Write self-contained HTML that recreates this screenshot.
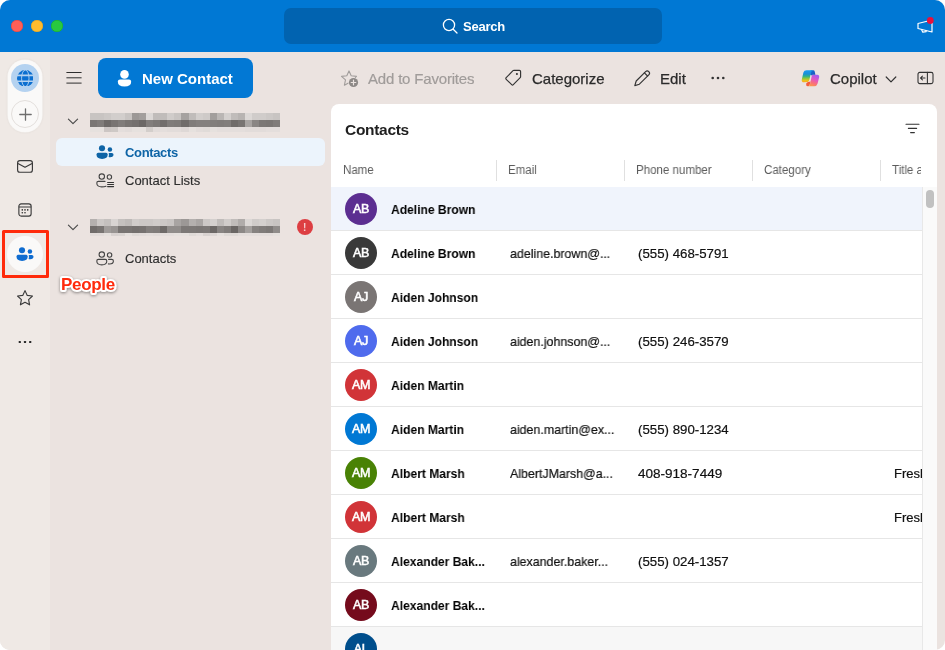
<!DOCTYPE html>
<html lang="en">
<head>
<meta charset="utf-8">
<title>Contacts</title>
<style>
*{box-sizing:border-box;margin:0;padding:0}
html,body{width:945px;height:650px;background:#fff;overflow:hidden}
body{font-family:"Liberation Sans",sans-serif;color:#242424;-webkit-font-smoothing:antialiased}
#win{position:absolute;left:0;top:0;width:945px;height:650px;border-radius:10px;overflow:hidden;background:#ebe3e0}
.abs{position:absolute}
.t{position:absolute;white-space:nowrap;line-height:1;will-change:transform}
/* top bar */
#top{position:absolute;left:0;top:0;width:945px;height:52px;background:#0078d4}
.tl{position:absolute;top:20px;width:12px;height:12px;border-radius:50%}
#search{position:absolute;left:284px;top:8px;width:378px;height:35.5px;border-radius:7px;background:#0163b0}
/* rail */
#rail{position:absolute;left:0;top:52px;width:50px;height:598px;background:#efe9e5}
#pill{position:absolute;left:8px;top:8px;width:34px;height:72px;border-radius:17px;background:#faf9f8;box-shadow:0 0 0 .6px #f7f5f3,0 0 3px rgba(0,0,0,.10)}
/* folder pane */
#newc{position:absolute;left:98px;top:58px;width:155px;height:40px;border-radius:8px;background:#0278d4}
.sel{position:absolute;left:56px;top:138px;width:269px;height:28px;border-radius:6px;background:#ecf4fc}
.blur{position:absolute;left:90px;width:191px;height:16px;filter:blur(.6px)}
/* toolbar */
/* panel */
#panel{position:absolute;left:331px;top:104px;width:605.5px;height:546px;background:#fff;border-radius:8px 8px 0 0;overflow:hidden}
.hd{will-change:transform;position:absolute;top:60px;transform-origin:0 50%;transform:scaleX(.96);font-size:12px;color:#5c5c5c;line-height:12px;white-space:nowrap}
.sep{position:absolute;top:56px;width:1px;height:21px;background:#e0e0e0}
.row{position:absolute;left:0;width:591px;height:44px;border-bottom:1px solid #e6e6e6}
.av{will-change:transform;position:absolute;left:14px;top:6px;width:32px;height:32px;border-radius:50%;color:#fff;font-size:12.5px;line-height:32px;text-align:center;font-weight:400;letter-spacing:-.3px;-webkit-text-stroke:.55px #fff}
.nm{will-change:transform;position:absolute;left:60px;top:16px;transform-origin:0 50%;transform:scaleX(.928);font-size:13px;line-height:14px;font-weight:700;color:#000;white-space:nowrap}
.em{will-change:transform;position:absolute;left:179px;top:16px;transform-origin:0 50%;transform:scaleX(.955);font-size:13px;line-height:14px;color:#111;-webkit-text-stroke:.2px #111;white-space:nowrap}
.ph{will-change:transform;position:absolute;left:307px;top:16px;transform-origin:0 50%;transform:scaleX(1.02);font-size:13px;line-height:14px;color:#111;-webkit-text-stroke:.2px #111;white-space:nowrap}
.ti{position:absolute;left:563px;top:16px;will-change:transform;font-size:13px;line-height:14px;color:#111;-webkit-text-stroke:.2px #111;white-space:nowrap;width:28px;overflow:hidden}
</style>
</head>
<body>
<div id="win">

<!-- TOP BAR -->
<div id="top">
  <div class="tl" style="left:11px;background:#ff5f57;box-shadow:inset 0 0 0 .5px #e0443e"></div>
  <div class="tl" style="left:31px;background:#febc2e;box-shadow:inset 0 0 0 .5px #dea123"></div>
  <div class="tl" style="left:51px;background:#28c840;box-shadow:inset 0 0 0 .5px #1aab29"></div>
  <div id="search">
    <svg class="abs" style="left:157px;top:8.6px" width="18" height="18" viewBox="0 0 18 18" fill="none" stroke="#fff" stroke-width="1.3" stroke-linecap="round"><circle cx="8" cy="8" r="5.6"/><path d="M12.2 12.2 L16 16"/></svg>
    <div class="t" style="left:178.5px;top:11.6px;font-size:13px;font-weight:700;color:#fff;letter-spacing:-.25px">Search</div>
  </div>
  <svg class="abs" style="left:915px;top:16px" width="22" height="20" viewBox="0 0 22 20" fill="none" stroke="#fff" stroke-width="1.2" stroke-linejoin="round"><path d="M3 7.5 L17 4 L17 16 L3 12.5 Z"/><path d="M6.5 13.4 L7.8 16.2 L11.2 15.6 L10.8 14.4"/><circle cx="15.3" cy="4.5" r="3.4" fill="#e8113c" stroke="none"/></svg>
</div>

<!-- LEFT RAIL -->
<div id="rail">
  <div id="pill">
    <div class="abs" style="left:3px;top:4px;width:28px;height:28px;border-radius:50%;background:#b4d2f0"></div>
    <svg class="abs" style="left:8.7px;top:9.7px" width="16.6" height="16.6" viewBox="0 0 16 16"><circle cx="8" cy="8" r="8" fill="#0b6fd0"/><g stroke="#b4d2f0" fill="none"><ellipse cx="8" cy="8" rx="3.6" ry="8" stroke-width=".9"/><path d="M0 5.2H16M0 10.8H16" stroke-width="1.5"/></g></svg>
    <div class="abs" style="left:3px;top:40px;width:28px;height:28px;border-radius:50%;border:1px solid #e3dfdc;background:#faf9f8"></div>
    <svg class="abs" style="left:10.5px;top:47.5px" width="13" height="13" viewBox="0 0 13 13" stroke="#6e6e6e" stroke-width="1.3" stroke-linecap="round"><path d="M6.5 .8V12.2M.8 6.5H12.2"/></svg>
  </div>
  <!-- mail -->
  <svg class="abs" style="left:16px;top:107px" width="18" height="15" viewBox="0 0 18 15" fill="none" stroke="#3a3a3a" stroke-width="1.15" stroke-linejoin="round"><rect x="1.6" y="1.6" width="14.8" height="11.6" rx="2.3"/><path d="M1.9 4.4 L9 8.3 L16.1 4.4"/></svg>
  <!-- calendar -->
  <svg class="abs" style="left:18px;top:151px" width="14" height="14" viewBox="0 0 16 16" fill="none" stroke="#3a3a3a" stroke-width="1.3"><rect x="1" y="1" width="14" height="14" rx="2.6"/><path d="M1 4.6H15"/><g fill="#333" stroke="none"><circle cx="4.9" cy="7.9" r=".95"/><circle cx="8" cy="7.9" r=".95"/><circle cx="11.1" cy="7.9" r=".95"/><circle cx="4.9" cy="11.1" r=".95"/><circle cx="8" cy="11.1" r=".95"/></g></svg>
  <!-- people selected -->
  <div class="abs" style="left:7px;top:184px;width:36px;height:36px;border-radius:50%;background:#faf9f8"></div>
  <svg class="abs" style="left:16px;top:195px" width="18" height="14" viewBox="0 0 18 14" fill="#0f6cd0"><circle cx="6" cy="3.3" r="3.05"/><path d="M0.5 9.6 Q0.5 7.8 2.2 7.8 H10 Q11.7 7.8 11.7 9.6 Q11.7 13.9 6.1 13.9 Q0.5 13.9 0.5 9.6Z"/><circle cx="13.9" cy="4.4" r="2.25"/><path d="M12.7 8.1 H15.8 Q17.5 8.1 17.5 9.6 Q17.5 12.3 14.2 12.3 Q13.2 12.3 12.6 12.1 Q13 10.8 12.9 9.4 Q12.9 8.7 12.7 8.1Z"/></svg>
  <div class="abs" style="left:2px;top:178px;width:47px;height:48px;border:3px solid #ff2a0a;border-radius:1.5px"></div>
  <!-- star -->
  <svg class="abs" style="left:16px;top:237px" width="18" height="18" viewBox="0 0 20 20" fill="none" stroke="#3a3a3a" stroke-width="1.25" stroke-linejoin="round"><path d="M10 1.8 L12.5 7.1 L18.3 7.8 L14 11.8 L15.1 17.6 L10 14.7 L4.9 17.6 L6 11.8 L1.7 7.8 L7.5 7.1 Z"/></svg>
  <!-- dots -->
  <svg class="abs" style="left:17px;top:288px" width="16" height="4" viewBox="0 0 16 4" fill="#2a2a2a"><rect x="1.7" y=".9" width="2.2" height="2.2" rx=".5"/><rect x="6.9" y=".9" width="2.2" height="2.2" rx=".5"/><rect x="12.1" y=".9" width="2.2" height="2.2" rx=".5"/></svg>
</div>

<!-- FOLDER PANE -->
<svg class="abs" style="left:66px;top:71px" width="16" height="14" viewBox="0 0 16 14" stroke="#2e2e2e" stroke-width="1" stroke-linecap="round"><path d="M.8 1.5H15.2M.8 6.8H15.2M.8 12.1H15.2"/></svg>
<div id="newc">
  <svg class="abs" style="left:18.6px;top:11.8px" width="15" height="17" viewBox="0 0 15 17" fill="#fff"><circle cx="7.5" cy="4.4" r="4.3"/><path d="M0.8 11.8 Q0.8 9.6 3 9.6 H12 Q14.2 9.6 14.2 11.8 Q14.2 16.6 7.5 16.6 Q0.8 16.6 0.8 11.8Z"/></svg>
  <div class="t" style="left:44px;top:13px;font-size:15px;font-weight:700;color:#fff">New Contact</div>
</div>

<svg class="abs" style="left:67px;top:118px" width="12" height="7" viewBox="0 0 12 7" fill="none" stroke="#4a4a4a" stroke-width="1.15" stroke-linecap="round" stroke-linejoin="round"><path d="M1.4 1.1 L6 5.7 L10.6 1.1"/></svg>
<svg class="abs" style="left:90.3px;top:113px" preserveAspectRatio="none" width="190" height="19" viewBox="0 0 191 19" shape-rendering="crispEdges"><rect x="0.00" y="0" width="7.37" height="7" fill="#c8c4c2"/><rect x="7.07" y="0" width="7.37" height="7" fill="#c8c4c2"/><rect x="14.15" y="0" width="7.37" height="7" fill="#ccc8c6"/><rect x="21.22" y="0" width="7.37" height="7" fill="#d2cecc"/><rect x="28.30" y="0" width="7.37" height="7" fill="#d2cecc"/><rect x="35.37" y="0" width="7.37" height="7" fill="#c8c4c2"/><rect x="42.44" y="0" width="7.37" height="7" fill="#9c9896"/><rect x="49.52" y="0" width="7.37" height="7" fill="#a29e9c"/><rect x="56.59" y="0" width="7.37" height="7" fill="#dcd8d6"/><rect x="63.67" y="0" width="7.37" height="7" fill="#c0bcba"/><rect x="70.74" y="0" width="7.37" height="7" fill="#c0bcba"/><rect x="77.81" y="0" width="7.37" height="7" fill="#d0ccca"/><rect x="84.89" y="0" width="7.37" height="7" fill="#c8c4c2"/><rect x="91.96" y="0" width="7.37" height="7" fill="#a6a2a0"/><rect x="99.04" y="0" width="7.37" height="7" fill="#c0bcba"/><rect x="106.11" y="0" width="7.37" height="7" fill="#d2cecc"/><rect x="113.19" y="0" width="7.37" height="7" fill="#cecac8"/><rect x="120.26" y="0" width="7.37" height="7" fill="#a29e9c"/><rect x="127.33" y="0" width="7.37" height="7" fill="#bab6b4"/><rect x="134.41" y="0" width="7.37" height="7" fill="#d4d0ce"/><rect x="141.48" y="0" width="7.37" height="7" fill="#c0bcba"/><rect x="148.56" y="0" width="7.37" height="7" fill="#b8b4b2"/><rect x="155.63" y="0" width="7.37" height="7" fill="#dcd8d6"/><rect x="162.70" y="0" width="7.37" height="7" fill="#d0ccca"/><rect x="169.78" y="0" width="7.37" height="7" fill="#d0ccca"/><rect x="176.85" y="0" width="7.37" height="7" fill="#ccc8c6"/><rect x="183.93" y="0" width="7.37" height="7" fill="#c8c4c2"/><rect x="0.00" y="7" width="7.37" height="7" fill="#7a7674"/><rect x="7.07" y="7" width="7.37" height="7" fill="#807c7a"/><rect x="14.15" y="7" width="7.37" height="7" fill="#6e6a68"/><rect x="21.22" y="7" width="7.37" height="7" fill="#787472"/><rect x="28.30" y="7" width="7.37" height="7" fill="#807c7a"/><rect x="35.37" y="7" width="7.37" height="7" fill="#787472"/><rect x="42.44" y="7" width="7.37" height="7" fill="#74706e"/><rect x="49.52" y="7" width="7.37" height="7" fill="#6c6866"/><rect x="56.59" y="7" width="7.37" height="7" fill="#827e7c"/><rect x="63.67" y="7" width="7.37" height="7" fill="#7c7876"/><rect x="70.74" y="7" width="7.37" height="7" fill="#726e6c"/><rect x="77.81" y="7" width="7.37" height="7" fill="#807c7a"/><rect x="84.89" y="7" width="7.37" height="7" fill="#7e7a78"/><rect x="91.96" y="7" width="7.37" height="7" fill="#706c6a"/><rect x="99.04" y="7" width="7.37" height="7" fill="#807c7a"/><rect x="106.11" y="7" width="7.37" height="7" fill="#84807e"/><rect x="113.19" y="7" width="7.37" height="7" fill="#84807e"/><rect x="120.26" y="7" width="7.37" height="7" fill="#827e7c"/><rect x="127.33" y="7" width="7.37" height="7" fill="#807c7a"/><rect x="134.41" y="7" width="7.37" height="7" fill="#827e7c"/><rect x="141.48" y="7" width="7.37" height="7" fill="#706c6a"/><rect x="148.56" y="7" width="7.37" height="7" fill="#787472"/><rect x="155.63" y="7" width="7.37" height="7" fill="#a8a4a2"/><rect x="162.70" y="7" width="7.37" height="7" fill="#8a8684"/><rect x="169.78" y="7" width="7.37" height="7" fill="#7c7876"/><rect x="176.85" y="7" width="7.37" height="7" fill="#7a7674"/><rect x="183.93" y="7" width="7.37" height="7" fill="#807c7a"/><rect x="0.00" y="14" width="7.37" height="5" fill="#e6e1de"/><rect x="7.07" y="14" width="7.37" height="5" fill="#e6e1de"/><rect x="14.15" y="14" width="7.37" height="5" fill="#ccc6c4"/><rect x="21.22" y="14" width="7.37" height="5" fill="#cec9c6"/><rect x="28.30" y="14" width="7.37" height="5" fill="#e4dedc"/><rect x="35.37" y="14" width="7.37" height="5" fill="#e2dcda"/><rect x="42.44" y="14" width="7.37" height="5" fill="#e6e1de"/><rect x="49.52" y="14" width="7.37" height="5" fill="#e6e1de"/><rect x="56.59" y="14" width="7.37" height="5" fill="#d3cecb"/><rect x="63.67" y="14" width="7.37" height="5" fill="#e2dcda"/><rect x="70.74" y="14" width="7.37" height="5" fill="#e4dedc"/><rect x="77.81" y="14" width="7.37" height="5" fill="#e2dcda"/><rect x="84.89" y="14" width="7.37" height="5" fill="#e2dcda"/><rect x="91.96" y="14" width="7.37" height="5" fill="#ded8d6"/><rect x="99.04" y="14" width="7.37" height="5" fill="#e6e1de"/><rect x="106.11" y="14" width="7.37" height="5" fill="#e2dcda"/><rect x="113.19" y="14" width="7.37" height="5" fill="#e0dbd8"/><rect x="120.26" y="14" width="7.37" height="5" fill="#e6e1de"/><rect x="127.33" y="14" width="7.37" height="5" fill="#e4dedc"/><rect x="134.41" y="14" width="7.37" height="5" fill="#e4dedc"/><rect x="141.48" y="14" width="7.37" height="5" fill="#e4dedc"/><rect x="148.56" y="14" width="7.37" height="5" fill="#e4dedc"/><rect x="155.63" y="14" width="7.37" height="5" fill="#e2dcda"/><rect x="162.70" y="14" width="7.37" height="5" fill="#e2dcda"/><rect x="169.78" y="14" width="7.37" height="5" fill="#e2dcda"/><rect x="176.85" y="14" width="7.37" height="5" fill="#e4dedc"/><rect x="183.93" y="14" width="7.37" height="5" fill="#e4dedc"/></svg>

<div class="sel"></div>
<svg class="abs" style="left:96px;top:145px" width="18" height="14" viewBox="0 0 18 14" fill="#0e64a6"><circle cx="6" cy="3.3" r="3.05"/><path d="M0.5 9.6 Q0.5 7.8 2.2 7.8 H10 Q11.7 7.8 11.7 9.6 Q11.7 13.9 6.1 13.9 Q0.5 13.9 0.5 9.6Z"/><circle cx="13.9" cy="4.4" r="2.25"/><path d="M12.7 8.1 H15.8 Q17.5 8.1 17.5 9.6 Q17.5 12.3 14.2 12.3 Q13.2 12.3 12.6 12.1 Q13 10.8 12.9 9.4 Q12.9 8.7 12.7 8.1Z"/></svg>
<div class="t" style="left:125px;top:146px;font-size:13px;font-weight:700;color:#0e64a6;letter-spacing:-.35px">Contacts</div>

<svg class="abs" style="left:96px;top:173px" width="19" height="15" viewBox="0 0 19 15" fill="none" stroke="#444" stroke-width="1.1" stroke-linecap="round"><circle cx="5.8" cy="3.6" r="2.7"/><circle cx="13.4" cy="4" r="2.2"/><path d="M10 13.2 Q8.4 13.9 5.8 13.9 Q0.8 13.9 0.8 10 Q0.8 8.4 2.4 8.4 H9"/><path d="M11.6 9.4H17.6M11.6 11.5H17.6M11.6 13.6H17.6" stroke-width="1.05" stroke="#333"/></svg>
<div class="t" style="left:125px;top:174px;font-size:13px;color:#2e2e2e;-webkit-text-stroke:.15px #2e2e2e">Contact Lists</div>

<svg class="abs" style="left:67px;top:224px" width="12" height="7" viewBox="0 0 12 7" fill="none" stroke="#4a4a4a" stroke-width="1.15" stroke-linecap="round" stroke-linejoin="round"><path d="M1.4 1.1 L6 5.7 L10.6 1.1"/></svg>
<svg class="abs" style="left:90.3px;top:219px" preserveAspectRatio="none" width="190" height="17" viewBox="0 0 191 17" shape-rendering="crispEdges"><rect x="0.00" y="0" width="7.37" height="7" fill="#b4b0ae"/><rect x="7.07" y="0" width="7.37" height="7" fill="#ccc8c6"/><rect x="14.15" y="0" width="7.37" height="7" fill="#c4c0be"/><rect x="21.22" y="0" width="7.37" height="7" fill="#d8d4d2"/><rect x="28.30" y="0" width="7.37" height="7" fill="#c4c0be"/><rect x="35.37" y="0" width="7.37" height="7" fill="#bebab8"/><rect x="42.44" y="0" width="7.37" height="7" fill="#d0ccca"/><rect x="49.52" y="0" width="7.37" height="7" fill="#ccc8c6"/><rect x="56.59" y="0" width="7.37" height="7" fill="#ccc8c6"/><rect x="63.67" y="0" width="7.37" height="7" fill="#d0ccca"/><rect x="70.74" y="0" width="7.37" height="7" fill="#ccc8c6"/><rect x="77.81" y="0" width="7.37" height="7" fill="#c8c4c2"/><rect x="84.89" y="0" width="7.37" height="7" fill="#a8a4a2"/><rect x="91.96" y="0" width="7.37" height="7" fill="#9c9896"/><rect x="99.04" y="0" width="7.37" height="7" fill="#b4b0ae"/><rect x="106.11" y="0" width="7.37" height="7" fill="#aaa6a4"/><rect x="113.19" y="0" width="7.37" height="7" fill="#ccc8c6"/><rect x="120.26" y="0" width="7.37" height="7" fill="#d4d0ce"/><rect x="127.33" y="0" width="7.37" height="7" fill="#c0bcba"/><rect x="134.41" y="0" width="7.37" height="7" fill="#d0ccca"/><rect x="141.48" y="0" width="7.37" height="7" fill="#c0bcba"/><rect x="148.56" y="0" width="7.37" height="7" fill="#b0acaa"/><rect x="155.63" y="0" width="7.37" height="7" fill="#dcd8d6"/><rect x="162.70" y="0" width="7.37" height="7" fill="#d0ccca"/><rect x="169.78" y="0" width="7.37" height="7" fill="#d4d0ce"/><rect x="176.85" y="0" width="7.37" height="7" fill="#ccc8c6"/><rect x="183.93" y="0" width="7.37" height="7" fill="#c8c4c2"/><rect x="0.00" y="7" width="7.37" height="7" fill="#706c6a"/><rect x="7.07" y="7" width="7.37" height="7" fill="#787472"/><rect x="14.15" y="7" width="7.37" height="7" fill="#a09c9a"/><rect x="21.22" y="7" width="7.37" height="7" fill="#989492"/><rect x="28.30" y="7" width="7.37" height="7" fill="#787472"/><rect x="35.37" y="7" width="7.37" height="7" fill="#787472"/><rect x="42.44" y="7" width="7.37" height="7" fill="#74706e"/><rect x="49.52" y="7" width="7.37" height="7" fill="#767270"/><rect x="56.59" y="7" width="7.37" height="7" fill="#827e7c"/><rect x="63.67" y="7" width="7.37" height="7" fill="#807c7a"/><rect x="70.74" y="7" width="7.37" height="7" fill="#6e6a68"/><rect x="77.81" y="7" width="7.37" height="7" fill="#908c8a"/><rect x="84.89" y="7" width="7.37" height="7" fill="#908c8a"/><rect x="91.96" y="7" width="7.37" height="7" fill="#7c7876"/><rect x="99.04" y="7" width="7.37" height="7" fill="#7c7876"/><rect x="106.11" y="7" width="7.37" height="7" fill="#7a7674"/><rect x="113.19" y="7" width="7.37" height="7" fill="#7c7876"/><rect x="120.26" y="7" width="7.37" height="7" fill="#6c6866"/><rect x="127.33" y="7" width="7.37" height="7" fill="#888482"/><rect x="134.41" y="7" width="7.37" height="7" fill="#807c7a"/><rect x="141.48" y="7" width="7.37" height="7" fill="#6a6664"/><rect x="148.56" y="7" width="7.37" height="7" fill="#8c8886"/><rect x="155.63" y="7" width="7.37" height="7" fill="#a4a09e"/><rect x="162.70" y="7" width="7.37" height="7" fill="#868280"/><rect x="169.78" y="7" width="7.37" height="7" fill="#807c7a"/><rect x="176.85" y="7" width="7.37" height="7" fill="#7c7876"/><rect x="183.93" y="7" width="7.37" height="7" fill="#908c8a"/><rect x="0.00" y="14" width="7.37" height="3" fill="#e2dcda"/><rect x="7.07" y="14" width="7.37" height="3" fill="#e2dcda"/><rect x="14.15" y="14" width="7.37" height="3" fill="#e6e1de"/><rect x="21.22" y="14" width="7.37" height="3" fill="#d8d2d0"/><rect x="28.30" y="14" width="7.37" height="3" fill="#dad5d2"/><rect x="35.37" y="14" width="7.37" height="3" fill="#e6e1de"/><rect x="42.44" y="14" width="7.37" height="3" fill="#dfdad7"/><rect x="49.52" y="14" width="7.37" height="3" fill="#e2dcda"/><rect x="56.59" y="14" width="7.37" height="3" fill="#e4dedc"/><rect x="63.67" y="14" width="7.37" height="3" fill="#e2dcda"/><rect x="70.74" y="14" width="7.37" height="3" fill="#e4dedc"/><rect x="77.81" y="14" width="7.37" height="3" fill="#e4dedc"/><rect x="84.89" y="14" width="7.37" height="3" fill="#e6e1de"/><rect x="91.96" y="14" width="7.37" height="3" fill="#e6e1de"/><rect x="99.04" y="14" width="7.37" height="3" fill="#dfdad7"/><rect x="106.11" y="14" width="7.37" height="3" fill="#e4dedc"/><rect x="113.19" y="14" width="7.37" height="3" fill="#d8d2d0"/><rect x="120.26" y="14" width="7.37" height="3" fill="#ddd7d5"/><rect x="127.33" y="14" width="7.37" height="3" fill="#e6e1de"/><rect x="134.41" y="14" width="7.37" height="3" fill="#dfdad7"/><rect x="141.48" y="14" width="7.37" height="3" fill="#dfdad7"/><rect x="148.56" y="14" width="7.37" height="3" fill="#e4dedc"/><rect x="155.63" y="14" width="7.37" height="3" fill="#e4dedc"/><rect x="162.70" y="14" width="7.37" height="3" fill="#e4dedc"/><rect x="169.78" y="14" width="7.37" height="3" fill="#e4dedc"/><rect x="176.85" y="14" width="7.37" height="3" fill="#e4dedc"/><rect x="183.93" y="14" width="7.37" height="3" fill="#e6e1de"/></svg>
<div class="abs" style="left:297px;top:219px;width:16px;height:16px;border-radius:50%;background:#dd3e42"></div>
<div class="t" style="left:303.2px;top:223px;font-size:10px;font-weight:700;color:rgba(255,255,255,.72)">!</div>

<svg class="abs" style="left:96px;top:251px" width="19" height="15" viewBox="0 0 19 15" fill="none" stroke="#444" stroke-width="1.1" stroke-linecap="round"><circle cx="5.8" cy="3.6" r="2.7"/><circle cx="13.6" cy="4" r="2.2"/><path d="M0.8 10 Q0.8 8.4 2.4 8.4 H9.2 Q10.8 8.4 10.8 10 Q10.8 13.9 5.8 13.9 Q0.8 13.9 0.8 10Z"/><path d="M12.6 8.4 H15.6 Q17.4 8.4 17.4 10 Q17.4 13 13.6 13 Q12.9 13 12.4 12.9"/></svg>
<div class="t" style="left:125px;top:252px;font-size:13px;color:#2e2e2e;-webkit-text-stroke:.15px #2e2e2e">Contacts</div>

<svg class="abs" style="left:51px;top:266px;filter:drop-shadow(0 1.2px 1.6px rgba(0,0,0,.42))" width="80" height="38" viewBox="0 0 80 38"><text x="10" y="24.2" font-family="Liberation Sans, sans-serif" font-size="17" font-weight="700" letter-spacing="-.3" fill="#ff2a0c" stroke="#fff" stroke-width="4.2" stroke-linejoin="round" paint-order="stroke fill">People</text></svg>

<!-- TOOLBAR -->
<div id="toolbar">
  <!-- add to favorites (disabled) -->
  <svg class="abs" style="left:340px;top:69px" width="20" height="20" viewBox="0 0 20 20" fill="none" stroke="#a19d9b" stroke-width="1.1" stroke-linejoin="round" stroke-linecap="round"><path d="M8 14.2 L4.4 16.2 L5.5 10.9 L1.5 7.4 L6.8 6.8 L9 1.9 L11.2 6.8 L16.5 7.4 L15.4 8.4"/><circle cx="13.5" cy="13.5" r="4.6" fill="#8d8987" stroke="none"/><path d="M13.5 11.2V15.8M11.2 13.5H15.8" stroke="#ebe3e0" stroke-width="1.2"/></svg>
  <div class="t" style="left:367.6px;top:71px;font-size:15px;letter-spacing:-.18px;color:#a09c9a;-webkit-text-stroke:.2px #a09c9a">Add to Favorites</div>
  <!-- categorize -->
  <svg class="abs" style="left:504px;top:68px" width="19" height="19" viewBox="0 0 19 19" fill="none" stroke="#333" stroke-width="1.15" stroke-linejoin="round"><path d="M9.9 2.3 H15.4 Q16.6 2.3 16.6 3.5 V8.7 Q16.6 9.2 16.2 9.6 L9.3 16.7 Q8.5 17.5 7.7 16.7 L2.2 11.3 Q1.4 10.5 2.2 9.7 L9 2.7 Q9.4 2.3 9.9 2.3Z"/><circle cx="12.9" cy="6" r="1.05" fill="#333" stroke="none"/></svg>
  <div class="t" style="left:531.5px;top:71px;font-size:15px;color:#2b2b2b;-webkit-text-stroke:.25px #2b2b2b">Categorize</div>
  <!-- edit -->
  <svg class="abs" style="left:633px;top:68.5px" width="19" height="19" viewBox="0 0 19 19" fill="none" stroke="#333" stroke-width="1.15" stroke-linejoin="round" stroke-linecap="round"><path d="M12.6 2.6 Q14.2 1 15.8 2.6 Q17.4 4.2 15.8 5.8 L6.4 15.2 L1.8 16.6 L3.2 12 Z"/><path d="M11.4 3.8 L14.6 7"/></svg>
  <div class="t" style="left:660px;top:71px;font-size:15px;color:#2b2b2b;-webkit-text-stroke:.25px #2b2b2b">Edit</div>
  <!-- more -->
  <svg class="abs" style="left:711px;top:76.4px" width="14" height="4" viewBox="0 0 14 4" fill="#333"><circle cx="1.7" cy="2" r="1.3"/><circle cx="7" cy="2" r="1.3"/><circle cx="12.3" cy="2" r="1.3"/></svg>
  <!-- copilot -->
  <svg class="abs" style="left:801.2px;top:70.2px" width="19" height="17" viewBox="0 0 19 17">
    <defs>
      <linearGradient id="cg1" x1="0" y1="0" x2="0" y2="1"><stop offset="0" stop-color="#1a9cf0"/><stop offset=".3" stop-color="#1a8fd8"/><stop offset=".5" stop-color="#2fb08a"/><stop offset=".68" stop-color="#8cc63c"/><stop offset=".88" stop-color="#f2c41a"/><stop offset="1" stop-color="#f8a020"/></linearGradient>
      <linearGradient id="cg2" x1=".7" y1="0" x2=".3" y2="1"><stop offset="0" stop-color="#a45cf2"/><stop offset=".4" stop-color="#e458c0"/><stop offset=".7" stop-color="#f9707a"/><stop offset="1" stop-color="#fb9a48"/></linearGradient>
      <linearGradient id="cg3" x1="0" y1="0" x2="1" y2="1"><stop offset="0" stop-color="#1a74d8"/><stop offset="1" stop-color="#1a4fb8"/></linearGradient>
      <linearGradient id="cg4" x1="0" y1="0" x2="1" y2="1"><stop offset="0" stop-color="#f0503a"/><stop offset="1" stop-color="#f86a40"/></linearGradient>
    </defs>
    <path d="M5.3 13.2 Q6 12.2 7.2 12 L9.6 11.4 L8.8 14.4 Q8.4 16.3 6.6 16.3 Q5.6 16.3 5.2 15.2 Z" fill="url(#cg4)"/>
    <path d="M11.8 4.8 H16.2 Q18.6 4.8 18.1 7.4 L16.6 13.6 Q15.9 16.3 13.2 16.3 H6.6 Q8.4 16.3 8.9 14.4 L10.6 6.4 Q10.9 4.8 11.8 4.8Z" fill="url(#cg2)"/>
    <path d="M9.6 .3 H12.4 Q13.4 .3 13.7 1.4 L14.4 4.8 H11.8 Q10.9 4.8 10.5 5.6 L9 4.4 Z" fill="url(#cg3)"/>
    <path d="M2.4 2.6 Q3 .3 5.6 .3 H12.4 Q10.6 .3 10.1 2.2 L8.4 9.8 Q8 11.6 6.6 11.9 L3 12.2 Q.2 12.2 .8 9.4 Z" fill="url(#cg1)"/>
  </svg>
  <div class="t" style="left:829.5px;top:71px;font-size:15px;color:#2b2b2b;-webkit-text-stroke:.25px #2b2b2b">Copilot</div>
  <svg class="abs" style="left:884.6px;top:75.6px" width="12" height="7" viewBox="0 0 12 7" fill="none" stroke="#333" stroke-width="1.2" stroke-linecap="round" stroke-linejoin="round"><path d="M1.2 1 L6 5.8 L10.8 1"/></svg>
  <!-- side panel icon -->
  <svg class="abs" style="left:917px;top:71px" width="17" height="14" viewBox="0 0 17 14" fill="none" stroke="#333" stroke-width="1.1" stroke-linecap="round" stroke-linejoin="round"><rect x="1" y="1.4" width="15" height="11.2" rx="1.8"/><path d="M10.4 1.4V12.6M8 7H3.6M5.4 5.2 L3.6 7 L5.4 8.8"/></svg>
</div>


<!-- PANEL -->
<div id="panel">
  <div class="t" style="left:14px;top:17.9px;font-size:15.5px;letter-spacing:-.3px;font-weight:700;color:#1f1f1f">Contacts</div>
  <svg class="abs" style="left:574.3px;top:19.3px" width="15" height="11" viewBox="0 0 15 11" stroke="#333" stroke-width="1.1" stroke-linecap="round"><path d="M1 1.2H14M3.4 5.4H11.6M5.6 9.6H9.4"/></svg>
  <div class="hd" style="left:12px">Name</div>
  <div class="sep" style="left:165px"></div>
  <div class="hd" style="left:177px">Email</div>
  <div class="sep" style="left:293px"></div>
  <div class="hd" style="left:305px">Phone number</div>
  <div class="sep" style="left:421px"></div>
  <div class="hd" style="left:433px">Category</div>
  <div class="sep" style="left:549px"></div>
  <div class="hd" style="left:561px;width:29.6px;overflow:hidden">Title and</div>
<div class="row" style="top:83px;background:#f0f4fc"><div class="av" style="background:#5c2e91">AB</div><div class="nm">Adeline Brown</div></div>
<div class="row" style="top:127px;background:#fff"><div class="av" style="background:#393939">AB</div><div class="nm">Adeline Brown</div><div class="em">adeline.brown@...</div><div class="ph">(555) 468-5791</div></div>
<div class="row" style="top:171px;background:#fff"><div class="av" style="background:#7a7574">AJ</div><div class="nm">Aiden Johnson</div></div>
<div class="row" style="top:215px;background:#fff"><div class="av" style="background:#4f6bed">AJ</div><div class="nm">Aiden Johnson</div><div class="em">aiden.johnson@...</div><div class="ph">(555) 246-3579</div></div>
<div class="row" style="top:259px;background:#fff"><div class="av" style="background:#d13438">AM</div><div class="nm">Aiden Martin</div></div>
<div class="row" style="top:303px;background:#fff"><div class="av" style="background:#0078d4">AM</div><div class="nm">Aiden Martin</div><div class="em">aiden.martin@ex...</div><div class="ph">(555) 890-1234</div></div>
<div class="row" style="top:347px;background:#fff"><div class="av" style="background:#498205">AM</div><div class="nm">Albert Marsh</div><div class="em">AlbertJMarsh@a...</div><div class="ph" style="transform:scaleX(1.04)">408-918-7449</div><div class="ti">Fresh</div></div>
<div class="row" style="top:391px;background:#fff"><div class="av" style="background:#d13438">AM</div><div class="nm">Albert Marsh</div><div class="ti">Fresh</div></div>
<div class="row" style="top:435px;background:#fff"><div class="av" style="background:#69797e">AB</div><div class="nm">Alexander Bak...</div><div class="em">alexander.baker...</div><div class="ph">(555) 024-1357</div></div>
<div class="row" style="top:479px;background:#fff"><div class="av" style="background:#750b1c">AB</div><div class="nm">Alexander Bak...</div></div>
<div class="row" style="top:523px;background:#f7f7f7"><div class="av" style="background:#004e8c">AL</div></div>
  <div class="abs" style="left:591px;top:83px;width:15px;height:463px;background:#fafafa;border-left:1px solid #e8e8e8"></div>
  <div class="abs" style="left:595px;top:86px;width:8px;height:18px;border-radius:4px;background:#c1c1c1"></div>
</div>


</div>
</body>
</html>
